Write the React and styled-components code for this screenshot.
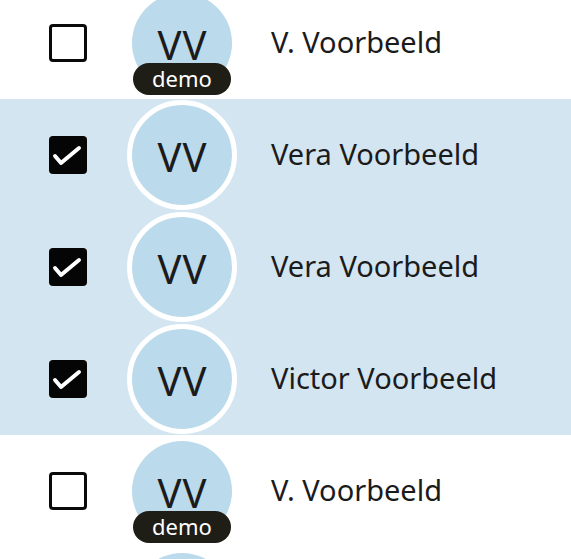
import React from "react";
import styled, { createGlobalStyle } from "styled-components";

const GlobalStyle = createGlobalStyle`
  html, body {
    margin: 0;
    padding: 0;
    background: #ffffff;
    overflow: hidden;
  }
  body {
    font-family: "Noto Sans", "Open Sans", sans-serif;
    color: #1b1b1b;
  }
`;

const people = [
  { name: "V. Voorbeeld", initials: "VV", demo: true, selected: false },
  { name: "Vera Voorbeeld", initials: "VV", selected: true },
  { name: "Vera Voorbeeld", initials: "VV", selected: true },
  { name: "Victor Voorbeeld", initials: "VV", selected: true },
  { name: "V. Voorbeeld", initials: "VV", demo: true, selected: false },
  { name: "", initials: "", selected: false },
];

const App = () => {
  return (
    <>
      <GlobalStyle />
      <List>
        {people.map((p, i) => (
          <Row key={i} $selected={p.selected}>
            <Check $checked={p.selected}>
              {p.selected && (
                <svg width="38" height="38" viewBox="0 0 38 38">
                  <path
                    d="M6 20 L12 27 L30 12"
                    fill="none"
                    stroke="#ffffff"
                    strokeWidth="4"
                    strokeLinecap="round"
                    strokeLinejoin="round"
                  />
                </svg>
              )}
            </Check>
            <Avatar $selected={p.selected}>
              <Initials>{p.initials}</Initials>
              {p.demo && <Badge>demo</Badge>}
            </Avatar>
            <Name>{p.name}</Name>
          </Row>
        ))}
      </List>
    </>
  );
};

export default App;

const List = styled.div`
  display: flex;
  flex-direction: column;
  margin-top: -13px;
`;

const Row = styled.div`
  display: flex;
  align-items: center;
  height: 112px;
  padding-left: 49px;
  background-color: ${(p) => (p.$selected ? "#d3e5f1" : "#ffffff")};
`;

const Check = styled.div`
  box-sizing: border-box;
  width: 38px;
  height: 38px;
  flex-shrink: 0;
  border-radius: 4px;
  border: ${(p) => (p.$checked ? "none" : "3.5px solid #0a0a0a")};
  background-color: ${(p) => (p.$checked ? "#050505" : "#ffffff")};
  display: flex;
  align-items: center;
  justify-content: center;

  svg {
    display: block;
  }
`;

const Avatar = styled.div`
  position: relative;
  box-sizing: border-box;
  width: 110px;
  height: 110px;
  flex-shrink: 0;
  margin-left: 40px;
  border-radius: 50%;
  border: 5px solid ${(p) => (p.$selected ? "#ffffff" : "transparent")};
  background-color: #bbdaeb;
  background-clip: padding-box;
  display: flex;
  align-items: center;
  justify-content: center;
`;

const Initials = styled.span`
  font-size: 40px;
  line-height: 1;
  margin-top: 3px;
  color: #1b1b1b;
  font-kerning: none;
  letter-spacing: 1px;
  margin-right: -1px;
`;

const Badge = styled.span`
  position: absolute;
  left: 50%;
  top: 70px;
  transform: translateX(-50%);
  width: 98px;
  height: 32px;
  border-radius: 16px;
  background-color: #1e1d16;
  color: #ffffff;
  font-size: 22px;
  line-height: 31px;
  text-align: center;
`;

const Name = styled.div`
  margin-left: 34px;
  margin-top: -3px;
  font-size: 29px;
  color: #1b1b1b;
  white-space: nowrap;
`;
